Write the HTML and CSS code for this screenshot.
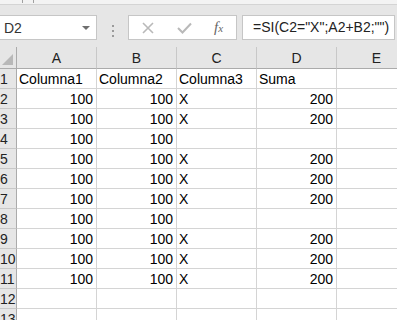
FILE: index.html
```html
<!DOCTYPE html>
<html lang="es">

<head>
    <meta charset="UTF-8">
    <meta name="viewport" content="width=device-width, initial-scale=1.0">
    <title>Hoja1</title>
    <link rel="stylesheet" href="styles.css">
</head>

<body>
    <div class="top">
        <span class="tick t1"></span>
        <span class="tick t2"></span>
    </div>

    <!-- barra de formulas -->
    <div class="fbar">
        <div class="namebox">
            <span class="name">D2</span>
            <span class="drop"></span>
        </div>
        <div class="dots"><i></i><i></i><i></i></div>
        <div class="btns">
            <svg class="ico" width="12" height="12" viewBox="0 0 12 12">
                <path d="M1 1 L11 11 M11 1 L1 11" stroke="#b9b9b9" stroke-width="1.6" fill="none" />
            </svg>
            <svg class="ico" width="15" height="12" viewBox="0 0 15 12">
                <path d="M1 6 L5.5 10.5 L14 1.5" stroke="#b9b9b9" stroke-width="2" fill="none" />
            </svg>
            <span class="fx"><i>f</i><i>x</i></span>
        </div>
        <div class="formula">=SI(C2="X";A2+B2;"")</div>
    </div>

    <!-- hoja -->
    <div class="sheet">
        <div class="row head">
            <div class="rh corner"><span class="tri"></span></div>
            <div class="ch">A</div>
            <div class="ch">B</div>
            <div class="ch">C</div>
            <div class="ch">D</div>
            <div class="ch">E</div>
        </div>
        <div class="row">
            <div class="rh">1</div>
            <div class="c">Columna1</div>
            <div class="c">Columna2</div>
            <div class="c">Columna3</div>
            <div class="c">Suma</div>
            <div class="c"></div>
        </div>
        <div class="row">
            <div class="rh">2</div>
            <div class="c n">100</div>
            <div class="c n">100</div>
            <div class="c">X</div>
            <div class="c n">200</div>
            <div class="c"></div>
        </div>
        <div class="row">
            <div class="rh">3</div>
            <div class="c n">100</div>
            <div class="c n">100</div>
            <div class="c">X</div>
            <div class="c n">200</div>
            <div class="c"></div>
        </div>
        <div class="row">
            <div class="rh">4</div>
            <div class="c n">100</div>
            <div class="c n">100</div>
            <div class="c"></div>
            <div class="c"></div>
            <div class="c"></div>
        </div>
        <div class="row">
            <div class="rh">5</div>
            <div class="c n">100</div>
            <div class="c n">100</div>
            <div class="c">X</div>
            <div class="c n">200</div>
            <div class="c"></div>
        </div>
        <div class="row">
            <div class="rh">6</div>
            <div class="c n">100</div>
            <div class="c n">100</div>
            <div class="c">X</div>
            <div class="c n">200</div>
            <div class="c"></div>
        </div>
        <div class="row">
            <div class="rh">7</div>
            <div class="c n">100</div>
            <div class="c n">100</div>
            <div class="c">X</div>
            <div class="c n">200</div>
            <div class="c"></div>
        </div>
        <div class="row">
            <div class="rh">8</div>
            <div class="c n">100</div>
            <div class="c n">100</div>
            <div class="c"></div>
            <div class="c"></div>
            <div class="c"></div>
        </div>
        <div class="row">
            <div class="rh">9</div>
            <div class="c n">100</div>
            <div class="c n">100</div>
            <div class="c">X</div>
            <div class="c n">200</div>
            <div class="c"></div>
        </div>
        <div class="row">
            <div class="rh">10</div>
            <div class="c n">100</div>
            <div class="c n">100</div>
            <div class="c">X</div>
            <div class="c n">200</div>
            <div class="c"></div>
        </div>
        <div class="row">
            <div class="rh">11</div>
            <div class="c n">100</div>
            <div class="c n">100</div>
            <div class="c">X</div>
            <div class="c n">200</div>
            <div class="c"></div>
        </div>
        <div class="row">
            <div class="rh">12</div>
            <div class="c"></div>
            <div class="c"></div>
            <div class="c"></div>
            <div class="c"></div>
            <div class="c"></div>
        </div>
        <div class="row">
            <div class="rh">13</div>
            <div class="c"></div>
            <div class="c"></div>
            <div class="c"></div>
            <div class="c"></div>
            <div class="c"></div>
        </div>
    </div>
</body>

</html>
```

FILE: styles.css
```css
* {
    padding: 0;
    margin: 0;
    box-sizing: border-box;
}

body {
    width: 397px;
    height: 320px;
    overflow: hidden;
    background-color: #e6e6e6;
    font-family: "Liberation Sans", Arial, sans-serif;
    font-size: 14px;
    color: #000;
}

.top {
    height: 5px;
    background-color: #f3f3f3;
    border-bottom: 1px solid #d4d4d4;
    display: flex;
}

.tick {
    width: 1px;
    height: 3px;
    background-color: #a0a0a0;
}

.t1 {
    margin-left: 22px;
}

.t2 {
    margin-left: 10px;
}

/* barra de formulas */
.fbar {
    height: 42px;
    display: flex;
    padding-top: 10px;
}

.namebox {
    width: 97px;
    height: 25px;
    background-color: #fff;
    border: 1px solid #c6c6c6;
    border-left: none;
    display: flex;
    align-items: center;
    justify-content: space-between;
    padding: 0 6px 0 4px;
    color: #333;
}

.drop {
    width: 0;
    height: 0;
    border-left: 4px solid transparent;
    border-right: 4px solid transparent;
    border-top: 4px solid #6f6f6f;
}

.dots {
    width: 31px;
    display: flex;
    flex-direction: column;
    align-items: center;
    justify-content: center;
    gap: 3px;
}

.dots i {
    width: 2px;
    height: 2px;
    background-color: #9a9a9a;
}

.btns {
    width: 109px;
    height: 25px;
    background-color: #fff;
    border: 1px solid #c6c6c6;
    display: flex;
    align-items: center;
    padding-left: 13px;
}

.btns svg:nth-child(2) {
    margin-left: 23px;
}

.fx {
    margin-left: 22px;
    font-family: "Liberation Serif", serif;
    color: #666;
    font-size: 15px;
}

.fx i:last-child {
    font-size: 11px;
}

.formula {
    margin-left: 5px;
    width: 153px;
    height: 25px;
    background-color: #fff;
    border: 1px solid #c6c6c6;
    padding-left: 10px;
    line-height: 23px;
    white-space: nowrap;
    color: #222;
}

/* hoja */
.row {
    display: flex;
    height: 20px;
}

.row.head {
    height: 22px;
}

.rh {
    width: 17px;
    flex: none;
    background-color: #e6e6e6;
    border-right: 1px solid #ababab;
    border-bottom: 1px solid #c8c8c8;
    line-height: 19px;
    padding-top: 1px;
    color: #222;
    white-space: nowrap;
}

.corner {
    border-bottom: 1px solid #ababab;
    position: relative;
}

.tri {
    position: absolute;
    right: 3px;
    bottom: 3px;
    width: 0;
    height: 0;
    border-left: 11px solid transparent;
    border-bottom: 11px solid #b8b8b8;
}

.ch {
    width: 80px;
    flex: none;
    background-color: #e6e6e6;
    border-right: 1px solid #c8c8c8;
    border-bottom: 1px solid #ababab;
    text-align: center;
    line-height: 21px;
    padding-top: 1px;
    color: #222;
}

.c {
    width: 80px;
    flex: none;
    background-color: #fff;
    border-right: 1px solid #d4d4d4;
    border-bottom: 1px solid #d4d4d4;
    line-height: 19px;
    padding: 1px 3px 0 2px;
    white-space: nowrap;
}

.c.n {
    text-align: right;
}
```
